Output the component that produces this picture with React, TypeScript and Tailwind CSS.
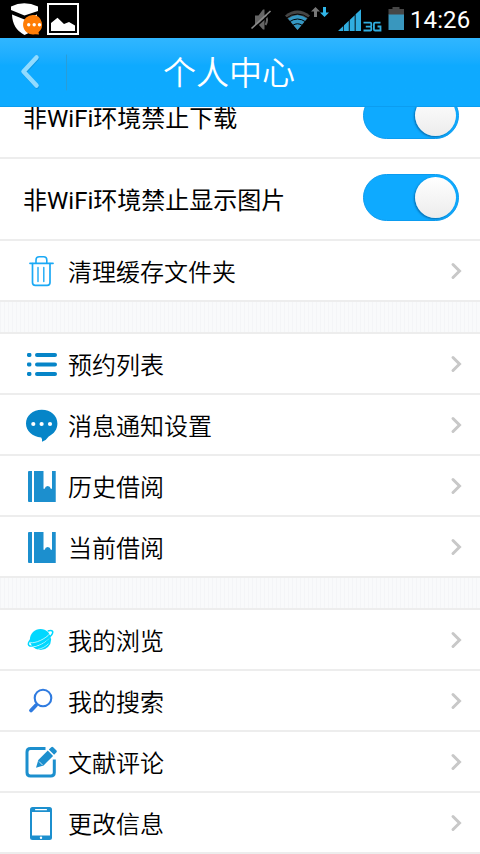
import type { ReactNode } from 'react';

const TrashIcon = () => (
  <svg viewBox="0 0 36 36" className="w-9 h-9" fill="none" stroke="#1ba9f5" strokeLinecap="round">
    <path d="M6 10.3h23" strokeWidth="1.8" />
    <path d="M12 10V7q0-3.2 3.2-3.2h4.4Q22.8 3.8 22.8 7v3" strokeWidth="1.6" />
    <path d="M8.5 10.5v19q0 2.8 2.8 2.8h11.9q2.8 0 2.8-2.8v-19" strokeWidth="1.7" />
    <path d="M14 14.5v14M19.8 14.5v14" strokeWidth="1.4" />
  </svg>
);

const ListIcon = () => (
  <svg viewBox="0 0 36 36" className="w-9 h-9" fill="#0685c8">
    <rect x="3" y="7" width="4.4" height="4" rx="1.4" />
    <rect x="3" y="16.5" width="4.4" height="4" rx="1.4" />
    <rect x="3" y="26" width="4.4" height="4" rx="1.4" />
    <rect x="11" y="7" width="22" height="4" rx="2" />
    <rect x="11" y="16.5" width="22" height="4" rx="2" />
    <rect x="11" y="26" width="22" height="4" rx="2" />
  </svg>
);

const MessageIcon = () => (
  <svg viewBox="0 0 36 36" className="w-9 h-9">
    <path
      d="M17.8 2.8C8.8 2.8 2 8.8 2 16.6c0 7.6 6.5 13.2 15.2 13.9q1.2 1.5.8 4.2 4.3-1.5 6.7-5.3c5.4-2.6 8.7-7 8.7-12.8 0-7.8-6.6-13.8-15.6-13.8z"
      fill="#0685c8"
    />
    <circle cx="9.3" cy="17" r="2.1" fill="#fff" />
    <circle cx="17.6" cy="17" r="2.1" fill="#fff" />
    <circle cx="26" cy="17" r="2.1" fill="#fff" />
  </svg>
);

const BookIcon = () => (
  <svg viewBox="0 0 36 36" className="w-9 h-9" fill="#1c8fce">
    <path d="M5 3h3v31H5q-1 0-1-1V4q0-1 1-1z" />
    <path d="M10 3h9.5v17.7h1.2q.5-2.7 3-2.7t3.1 2.7H28V3h3.5V34H10z" />
    <path d="M31 3h.8v31H31z" opacity=".6" />
  </svg>
);

const PlanetIcon = () => (
  <svg viewBox="0 0 36 36" className="w-9 h-9">
    <circle cx="16.5" cy="17.5" r="10.6" fill="#00d8ff" />
    <path d="M6 24.8c6 .6 15.500-3.600 21.500-11.300" fill="none" stroke="#fff" strokeWidth="1" />
    <path d="M14 27.300c4-.6 7.500-2.600 10.500-5.600" fill="none" stroke="#fff" strokeWidth=".6" />
    <path
      d="M7 17.200C4.500 20 3.800 22 4.800 23.200c2 2.400 10.200-.400 16.500-4.600 5.200-3.500 8.500-7.500 7.200-9.300-.7-1-2.500-1-4.800-.3"
      fill="none"
      stroke="#00d8ff"
      strokeWidth="1.500"
    />
    <path d="M6.500 20.600c4.800 1 15-3.600 19.800-9.300" fill="none" stroke="#fff" strokeWidth=".7" />
  </svg>
);

const SearchIcon = () => (
  <svg viewBox="0 0 36 36" className="w-9 h-9" fill="none" stroke="#2f7be0">
    <circle cx="19" cy="15" r="8.300" strokeWidth="2.100" />
    <path d="M13 21l-2 2.200" strokeWidth="2.200" />
    <path d="M12 22.300l-5 5.200" strokeWidth="3.800" strokeLinecap="round" />
  </svg>
);

const EditIcon = () => (
  <svg viewBox="0 0 36 36" className="w-9 h-9" fill="#1c8fce">
    <path
      d="M21.500 4.600H6.500q-3.500 0-3.500 3.500v20.300q0 3.500 3.500 3.500h20.300q3.500 0 3.500-3.500v-13"
      fill="none"
      stroke="#1c8fce"
      strokeWidth="3"
    />
    <path d="M12 23.800l2.300-7.700L23.800 6.600l5.300 5.300-9.500 9.500z" />
    <path d="M24.800 5.600l2.400-2.400q1-1 2 0L32.500 6.500q.8.900 0 1.700L30.100 10.700z" />
    <path d="M15 17.500l3.500 3.500" stroke="#fff" strokeWidth=".8" />
  </svg>
);

const PhoneIcon = () => (
  <svg viewBox="0 0 36 36" className="w-9 h-9">
    <rect x="6" y="2" width="22" height="33" rx="2.500" fill="#1c8fce" />
    <rect x="8" y="7" width="18" height="23.500" fill="#fff" />
    <rect x="11" y="4" width="12" height="1.300" rx=".6" fill="#fff" />
    <circle cx="17" cy="32.800" r="1.200" fill="#fff" />
  </svg>
);

const StatusBar = () => (
  <div className="flex h-[38px] shrink-0 bg-black">
    <svg viewBox="0 0 84 38" className="w-[84px] h-[38px]">
      <path d="M11 6.500Q24 0 38 6.500v4.500L24.500 15.500 11 10z" fill="#fff" />
      <path d="M12 14.500l12.500 5 12.500-5q1 15-12.500 20.500Q12.500 29 12 14.500z" fill="#fff" />
      <path d="M34 15a9.800 9.800 0 0 1 4.500 17.200l.5 2.300-4-.2a9.800 9.800 0 1 1-1-19.300z" fill="#ff7d05" />
      <circle cx="28.700" cy="24.800" r="1.700" fill="#fff" />
      <circle cx="34.200" cy="24.800" r="1.700" fill="#fff" />
      <circle cx="39.500" cy="24.800" r="1.700" fill="#fff" />
      <rect x="48" y="4" width="30" height="30" fill="none" stroke="#fff" strokeWidth="2" />
      <path d="M51 31v-8l6.500-5.200L64 24l5-2 6 3.500V31z" fill="#fff" />
    </svg>
    <svg viewBox="244 0 164 38" className="ml-auto w-[164px] h-[38px]">
      <path d="M255 15.500h3.500l4.500-6h1.500v20h-1.500l-4.500-5H255z" fill="#656565" />
      <path d="M265.500 15q3 4.500 0 10" fill="none" stroke="#656565" strokeWidth="2" />
      <path d="M253 29.500l18-16.500" stroke="#000" strokeWidth="1.500" />
      <path d="M251.500 28.500l19-17.500" stroke="#8a8a8a" strokeWidth="1.600" />
      <path d="M285 15.500Q297.500 5.500 310 15.500L297.500 30z" fill="#454545" />
      <path d="M288 18.500Q297.500 11.500 307 18.500L297.500 30z" fill="#3497c3" />
      <path d="M285.500 18.500q12-9 24 0M289 22q8.500-6 17 0M292.500 25.500q5-3.500 10 0" fill="none" stroke="#000" strokeWidth="1" />
      <path d="M315.500 7l4.500 4.500h-3V17h-3v-5.500h-3z" fill="#777" />
      <path d="M324.500 17l4.500-4.500h-3V7h-3v5.500h-3z" fill="#30b5e8" />
      <path d="M338 31l5.300-5V31zM344 31v-5.700l4.800-4.500V31zM349.700 31V20l5-4.700V31zM355.600 31V14.300l5.400-5V31z" fill="#30aee0" />
      <path
        d="M363.500 22.700h6.800q1 0 1 1v2q0 1-1 1h-4.500M370.300 26.700q1 0 1 1v1.800q0 1-1 1h-6.800M380.500 22.700h-5.300q-1.300 0-1.300 1.300v5.200q0 1.300 1.300 1.300h5.300v-4h-3"
        fill="none"
        stroke="#30aee0"
        strokeWidth="1.800"
      />
      <path d="M388.500 9h4V7h7v2h4.500v6h-15.500z" fill="#464646" />
      <path d="M388.500 14.500H404V30h-15.500z" fill="#3997be" />
    </svg>
    <span className="w-[72px] pl-[2px] text-[24px] leading-[40px] tracking-[0.100px] text-white font-['Roboto',sans-serif]">14:26</span>
  </div>
);

const Header = () => (
  <header className="flex h-[69px] shrink-0 items-center border-b border-[#0b9df0] bg-linear-to-b from-[#30b6ff] to-[#0eaaff] to-40%">
    <svg viewBox="0 0 67 68" className="h-[68px] w-[67px]" fill="none" strokeLinecap="round" strokeLinejoin="round">
      <path d="M37 20.500L24 34.500l13 14" stroke="#0784c8" strokeWidth="4.500" opacity=".5" />
      <path d="M36.500 19.500L23.500 33.500l13 14" stroke="#91dbff" strokeWidth="4.500" />
      <path d="M66.500 17v35" stroke="#299dd8" strokeWidth="1" />
    </svg>
    <h1 className="mt-[3px] ml-24 text-[33px] leading-[65px] font-[350] text-white">个人中心</h1>
  </header>
);

const SwitchRow = ({ label }: { label: string }) => (
  <div className="flex h-[82px] items-center justify-between border-b-2 border-[#ededed] pl-[23px] pr-[21px]">
    <span className="mt-[3px] text-[24px] leading-9">{label}</span>
    <div className="mb-1 flex h-[47px] w-24 items-center justify-end rounded-full border border-[#0b9cf0] bg-[#0eaaff] pr-[2px]">
      <div className="h-[41px] w-[41px] rounded-full bg-linear-to-b from-white to-[#ececec] shadow-[-1px_1px_2px_rgba(0,60,110,0.550)]" />
    </div>
  </div>
);

const MenuRow = ({ icon, label }: { icon: ReactNode; label: string }) => (
  <div className="flex h-[61px] items-center border-b-2 border-[#ededed] pl-6 pr-[18px]">
    <span className="mt-px mr-2">{icon}</span>
    <span className="mt-[5px] text-[24px] leading-9 font-[350]">{label}</span>
    <svg viewBox="0 0 12 18" className="ml-auto w-3 h-[18px]" fill="none" stroke="#c8c8c8" strokeWidth="3">
      <path d="M3 2.500l6.500 6.500-6.500 6.500" strokeLinecap="round" />
    </svg>
  </div>
);

const Divider = () => (
  <div className="h-8 border-b-2 border-[#ededed] bg-[#f9fafb] bg-[repeating-linear-gradient(90deg,#f4f5f7_0px,#f4f5f7_1px,transparent_1px,transparent_4px)]" />
);

const App = () => {
  return (
    <div className="flex h-[854px] w-[480px] flex-col overflow-hidden bg-white text-black font-['Roboto','Noto_Sans_CJK_SC',sans-serif]">
      <StatusBar />
      <Header />
      <main className="flex-1 overflow-hidden">
        <div className="-mt-[30px]">
          <SwitchRow label="非WiFi环境禁止下载" />
          <SwitchRow label="非WiFi环境禁止显示图片" />
          <MenuRow icon={<TrashIcon />} label="清理缓存文件夹" />
          <Divider />
          <MenuRow icon={<ListIcon />} label="预约列表" />
          <MenuRow icon={<MessageIcon />} label="消息通知设置" />
          <MenuRow icon={<BookIcon />} label="历史借阅" />
          <MenuRow icon={<BookIcon />} label="当前借阅" />
          <Divider />
          <MenuRow icon={<PlanetIcon />} label="我的浏览" />
          <MenuRow icon={<SearchIcon />} label="我的搜索" />
          <MenuRow icon={<EditIcon />} label="文献评论" />
          <MenuRow icon={<PhoneIcon />} label="更改信息" />
        </div>
      </main>
    </div>
  );
};

export default App;
